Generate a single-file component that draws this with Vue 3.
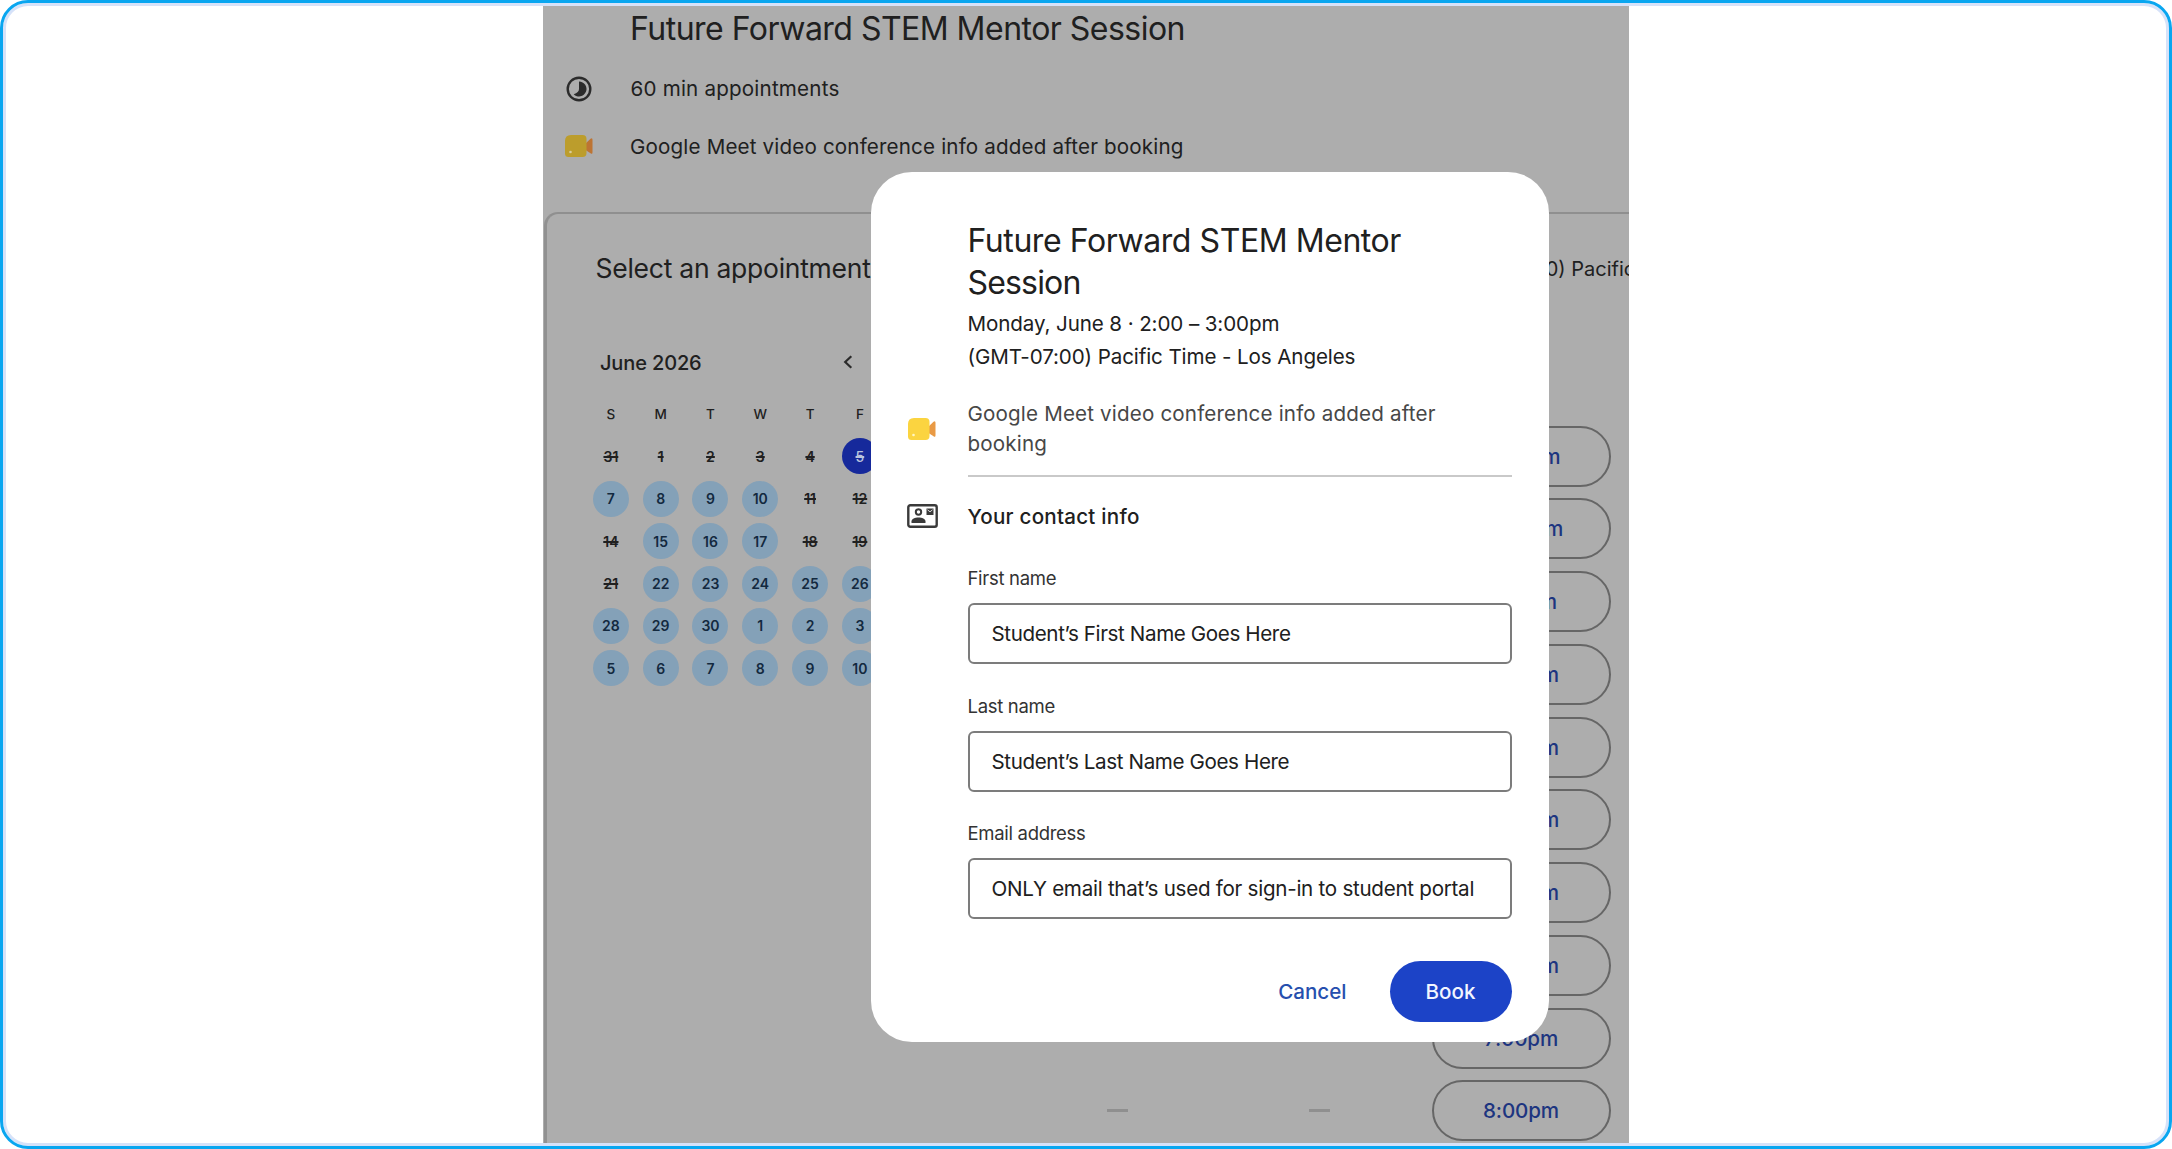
<script setup>
const weekdays = ['S', 'M', 'T', 'W', 'T', 'F']
const open = (n) => ({ n, state: 'open' })
const past = (n) => ({ n, state: 'past' })
const days = [
  past(31), past(1), past(2), past(3), past(4), { n: 5, state: 'today' },
  open(7), open(8), open(9), open(10), past(11), past(12),
  past(14), open(15), open(16), open(17), past(18), past(19),
  past(21), open(22), open(23), open(24), open(25), open(26),
  open(28), open(29), open(30), open(1), open(2), open(3),
  open(5), open(6), open(7), open(8), open(9), open(10),
]
const slots = ['11:00am', '12:00pm', '1:00pm', '2:00pm', '3:00pm', '4:00pm', '5:00pm', '6:00pm', '7:00pm', '8:00pm']
const fields = [
  { label: 'First name', value: 'Student’s First Name Goes Here', tracking: 't-neg' },
  { label: 'Last name', value: 'Student’s Last Name Goes Here', tracking: 't-neg' },
  { label: 'Email address', value: 'ONLY email that’s used for sign-in to student portal', tracking: 't-mid' },
]
</script>

<template>
  <div class="frame">
    <main class="page">
      <header class="head">
        <h1>Future Forward STEM Mentor Session</h1>
        <div class="info">
          <svg class="clock" viewBox="0 0 26 26">
            <circle cx="13" cy="13" r="11.3" fill="none" stroke="#2b2b2b" stroke-width="2.4" />
            <path d="M13 5.5a7.500 7.500 0 1 1-5.300 12.800Q13 16.500 13 13z" fill="#2b2b2b" />
          </svg>
          <span class="t-60">60 min appointments</span>
        </div>
        <div class="info">
          <svg class="meet" viewBox="0 0 28 24">
            <path d="M19 11 25.500 4.800q2-1.500 2 1v12.400q0 2.500-2 1L19 15z" fill="#bd7433" />
            <path d="M6 1h11.500q4 0 4 4v14q0 4-4 4H3.500Q0 23 0 19.500V7q0-6 6-6z" fill="#bc9d2c" />
            <circle cx="5.500" cy="18" r="1.300" fill="#d8cd9a" />
          </svg>
          <span class="t-pos">Google Meet video conference info added after booking</span>
        </div>
      </header>

      <section class="card">
        <div class="card-head">
          <h2>Select an appointment time</h2>
          <span class="zone">(GMT-07:00) Pacific Time - Los Angeles</span>
        </div>
        <div class="card-body">
          <div class="calendar">
            <div class="month">
              <span>June 2026</span>
              <svg viewBox="0 0 10 14"><path d="M8.300 1.300 2.200 7l6.100 5.700" fill="none" stroke="#2b2b2b" stroke-width="2.200" /></svg>
            </div>
            <div class="grid week"><span v-for="(d, i) in weekdays" :key="i">{{ d }}</span></div>
            <div class="grid">
              <span v-for="(d, i) in days" :key="i" class="cell"><b :class="d.state">{{ d.n }}</b></span>
            </div>
          </div>
          <div class="columns">
            <div class="empty"><i></i></div>
            <div class="empty"><i></i></div>
            <div class="slots">
              <button v-for="s in slots" :key="s">{{ s }}</button>
            </div>
          </div>
        </div>
      </section>

      <div class="modal">
        <h2>Future Forward STEM Mentor <span class="t-ses">Session</span></h2>
        <p class="when">Monday, June 8 · 2:00 – 3:00pm<br />(GMT-07:00) Pacific Time - Los Angeles</p>
        <div class="row conf">
          <svg class="meet" viewBox="0 0 28 24">
            <path d="M19 11 25.500 4.800q2-1.500 2 1v12.400q0 2.500-2 1L19 15z" fill="#e99a45" />
            <path d="M6 1h11.500q4 0 4 4v14q0 4-4 4H3.500Q0 23 0 19.500V7q0-6 6-6z" fill="#fbd440" />
            <circle cx="5.500" cy="18" r="1.300" fill="#fff6c4" />
          </svg>
          <p class="t-pos">Google Meet video conference info added after<br />booking</p>
        </div>
        <hr />
        <div class="row contact">
          <svg class="card-icon" viewBox="0 0 31 24">
            <rect x="1.300" y="1.300" width="28.400" height="21.400" rx="2" fill="none" stroke="#3a3a3a" stroke-width="2.400" />
            <circle cx="11.500" cy="8" r="2.700" fill="none" stroke="#3a3a3a" stroke-width="2" />
            <path d="M4.500 19v-1.500c0-2.800 3.500-4 7-4s7 1.200 7 4V19z" fill="#3a3a3a" />
            <path d="M19.500 4.500h7v6.500h-7z" fill="#3a3a3a" />
            <path d="m20.500 5.800 2.500 2 2.500-2" fill="none" stroke="#ddd" stroke-width="1" />
          </svg>
          <h3>Your contact info</h3>
        </div>
        <label v-for="f in fields" :key="f.label" class="field">
          <span class="label">{{ f.label }}</span>
          <span class="input" :class="f.tracking">{{ f.value }}</span>
        </label>
        <div class="actions">
          <button class="cancel">Cancel</button>
          <button class="book">Book</button>
        </div>
      </div>
    </main>
  </div>
</template>

<style>
body { background: #fff; }
</style>

<style scoped>
* { box-sizing: border-box; margin: 0; }
.frame {
  height: 1149px;
  border: 3px solid #09a6f0;
  border-radius: 28px;
  box-shadow: inset 0 0 0 3px #d6e2f9;
  padding: 3px 0;
  display: flex;
  justify-content: center;
  font-family: Inter, "Liberation Sans", sans-serif;
  font-size: 20.6px;
  color: #202020;
}
.page {
  position: relative;
  width: 1086px;
  height: 1137px;
  overflow: hidden;
  background: #adadad;
}
button { font: inherit; background: none; border: 0; padding: 0; }
.t-pos { letter-spacing: 0.165px; }
.t-60 { letter-spacing: 0.2px; }
.t-neg { letter-spacing: -0.38px; }
.t-mid { letter-spacing: -0.27px; }

.head { height: 169px; }
.head h1 {
  height: 46px;
  margin: 0 0 8px 87px;
  font-size: 32px;
  font-weight: 400;
  line-height: 46px;
  letter-spacing: -0.52px;
  white-space: nowrap;
}
.info {
  display: flex;
  align-items: center;
  height: 57.5px;
}
.clock { width: 26px; height: 26px; margin: 0 39px 0 22.5px; }
.meet { width: 28px; height: 24px; flex: none; }
.info .meet { margin: 0 37.5px 0 21.5px; }

.card {
  width: 1140px;
  height: 1000px;
  margin: 36.5px 0 0 1px;
  border: 2px solid #8f8f8f;
  border-left: 3px solid #919191;
  border-radius: 14px;
}
.card-head {
  display: flex;
  align-items: center;
  height: 60px;
  margin-top: 24px;
  padding-left: 48.5px;
  white-space: nowrap;
}
.card-head h2 {
  flex: 0 0 848px;
  font-size: 26.5px;
  font-weight: 400;
  letter-spacing: -0.26px;
}
.zone { font-size: 20px; padding-top: 2px; }
.card-body { display: flex; margin-top: 45px; padding-left: 39px; }
.calendar { width: 430px; flex: none; }
.month {
  display: flex;
  justify-content: space-between;
  align-items: center;
  height: 40px;
  width: 267px;
  padding-left: 14px;
  font-size: 20px;
  font-weight: 500;
  letter-spacing: -0.14px;
}
.month svg { width: 10px; height: 14px; margin-bottom: 2px; }
.grid {
  display: grid;
  grid-template-columns: repeat(6, 49.8px);
  grid-auto-rows: 42.45px;
  place-items: center;
}
.week {
  grid-auto-rows: 36px;
  margin: 13.5px 0 3px;
  font-size: 13.5px;
  font-weight: 500;
}
.cell b {
  display: flex;
  align-items: center;
  justify-content: center;
  width: 36px;
  height: 36px;
  border-radius: 50%;
  font-size: 14px;
  font-weight: 600;
}
.open { background: #84a1b8; color: #13293f; }
.past { text-decoration: line-through 1.5px; }
.cell .today { background: #16299b; color: #b9c4dd; font-weight: 500; text-decoration: line-through 1.5px; }
.columns { display: grid; grid-template-columns: repeat(3, 202px); margin-top: 83px; }
.empty {
  display: flex;
  align-items: flex-end;
  justify-content: center;
  padding-bottom: 29px;
}
.empty i { width: 21px; height: 3px; background: #8f8f8f; }
.slots { display: flex; flex-direction: column; align-items: center; gap: 11.75px; }
.slots button {
  flex: none;
  width: 179px;
  height: 61px;
  border: 2px solid #666;
  border-radius: 31px;
  color: #1d3580;
  font-weight: 500;
  letter-spacing: -0.14px;
}

.modal {
  position: absolute;
  left: 328px;
  top: 166px;
  width: 677.5px;
  height: 870px;
  padding: 48px 37px 0 96.5px;
  border-radius: 41px;
  background: #fff;
}
.modal h2 {
  font-size: 32px;
  font-weight: 400;
  line-height: 42px;
  letter-spacing: -0.44px;
}
.t-ses { letter-spacing: -0.83px; }
.when { margin-top: 3px; line-height: 33px; letter-spacing: -0.11px; }
.row { display: flex; align-items: center; white-space: nowrap; }
.conf { margin: 26px 0 0 -60px; line-height: 30.4px; color: #474747; }
.conf .meet { margin-right: 32px; }
.modal hr { height: 2px; margin-top: 15px; border: 0; background: #c9c9c9; }
.contact { height: 40px; margin: 19.5px 0 0 -60.5px; }
.card-icon { width: 31px; height: 24px; margin-right: 29.5px; }
.contact h3 { font-size: 20.6px; font-weight: 500; letter-spacing: 0.24px; }
.field { display: block; height: 127.2px; }
.contact + .field { margin-top: 30px; }
.label {
  display: block;
  height: 37px;
  font-size: 18.5px;
  line-height: 24px;
  letter-spacing: -0.3px;
  color: #333;
}
.input {
  display: flex;
  align-items: center;
  height: 61px;
  padding-left: 22px;
  border: 2px solid #7c7c7c;
  border-radius: 6px;
  white-space: nowrap;
}
.actions {
  display: flex;
  justify-content: flex-end;
  align-items: center;
  gap: 43px;
  margin-top: 13px;
  font-weight: 500;
}
.cancel { color: #264fae; }
.book {
  width: 122px;
  height: 61px;
  border-radius: 31px;
  background: #1c43c7;
  color: #f2f6ff;
}
</style>
